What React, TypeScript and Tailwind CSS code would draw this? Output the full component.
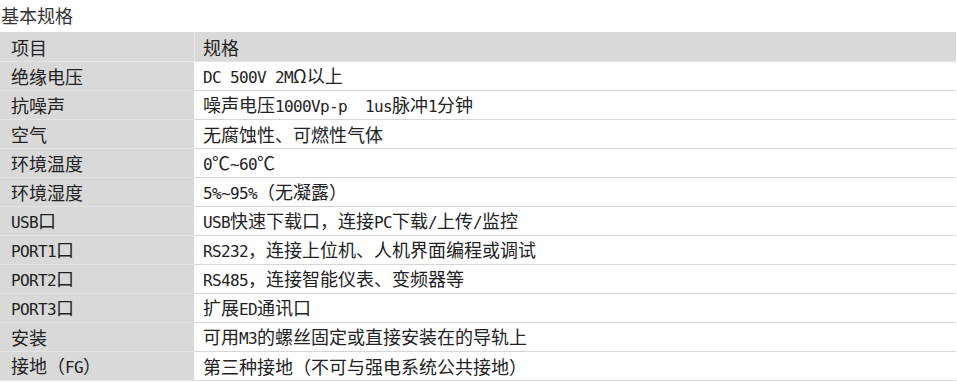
import React from "react";

const rows: [string, string][] = [
  ["绝缘电压", "DC 500V 2MΩ以上"],
  ["抗噪声", "噪声电压1000Vp-p  1us脉冲1分钟"],
  ["空气", "无腐蚀性、可燃性气体"],
  ["环境温度", "0℃~60℃"],
  ["环境湿度", "5%~95%（无凝露）"],
  ["USB口", "USB快速下载口，连接PC下载/上传/监控"],
  ["PORT1口", "RS232，连接上位机、人机界面编程或调试"],
  ["PORT2口", "RS485，连接智能仪表、变频器等"],
  ["PORT3口", "扩展ED通讯口"],
  ["安装", "可用M3的螺丝固定或直接安装在的导轨上"],
  ["接地（FG）", "第三种接地（不可与强电系统公共接地）"],
];

function Txt({ s }: { s: string }) {
  const parts = s.split(/([\x20-\x7e]+)/).filter((p) => p.length > 0);
  return (
    <span className="whitespace-pre">
      {parts.map((p, i) =>
        /^[\x20-\x7e]+$/.test(p) ? (
          <span
            key={i}
            className="font-['DejaVu_Sans_Mono',monospace] text-[16px] tracking-[-0.63px]"
          >
            {p}
          </span>
        ) : (
          <span key={i}>{p}</span>
        )
      )}
    </span>
  );
}

export default function App() {
  return (
    <div className="w-[957px] h-[382px] bg-white text-[#222] text-[18px] leading-none overflow-hidden font-['Noto_Sans_CJK_SC','Noto_Sans_CJK_JP',sans-serif]">
      <div className="h-[32px] pl-[1px] pt-[6px] text-[#333]">基本规格</div>
      <div className="w-[956px] flex flex-col">
        <div className="flex h-[30px]">
          <div className="w-[194px] bg-[#d9d9d9] border-b border-[#e6e6e6] pl-[11px] flex items-center">
            项目
          </div>
          <div className="w-[1px] bg-[#e9e9e9]" />
          <div className="flex-1 bg-[#d9d9d9] border-b border-[#e6e6e6] pl-[8px] flex items-center">
            规格
          </div>
        </div>
        {rows.map(([k, v]) => (
          <div key={k} className="flex h-[29px]">
            <div className="w-[194px] bg-[#d9d9d9] border-b border-[#e4e4e4] pl-[11px] flex items-center">
              <Txt s={k} />
            </div>
            <div className="w-[1px] bg-white border-b border-[#d6d6d6]" />
            <div className="flex-1 bg-white border-b border-[#d6d6d6] pl-[8px] flex items-center">
              <Txt s={v} />
            </div>
          </div>
        ))}
      </div>
    </div>
  );
}
